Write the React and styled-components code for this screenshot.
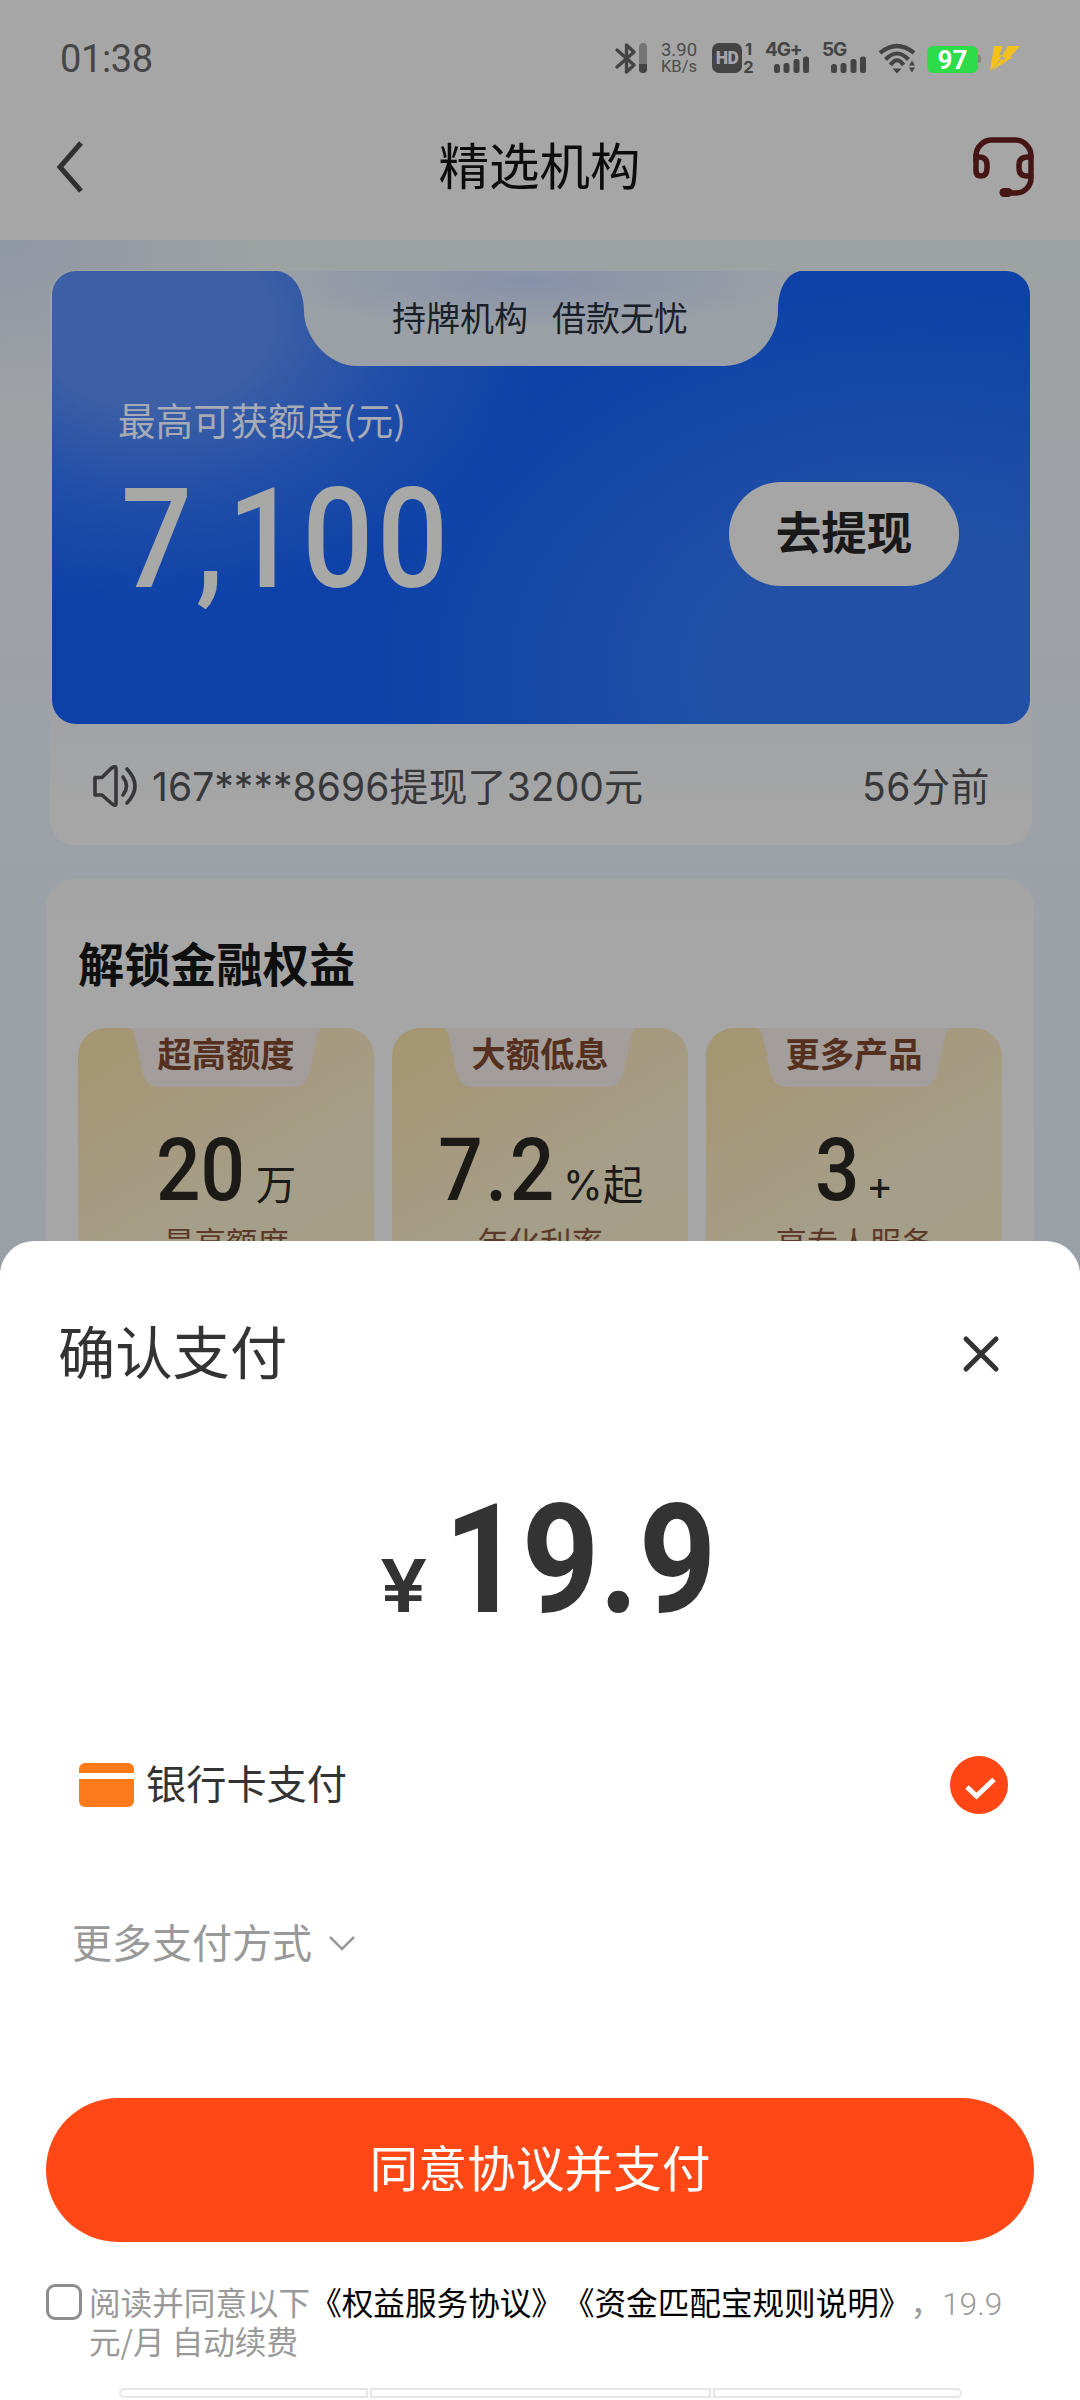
import React from 'react';
import styled, { createGlobalStyle } from 'styled-components';

const cjk = "'Noto Sans CJK SC', sans-serif";

const GlobalStyle = createGlobalStyle`
  * {
    box-sizing: border-box;
  }
  body {
    margin: 0;
    background: #a6a6a6;
    font-family: ${cjk};
    text-spacing-trim: space-all;
  }
`;

const Screen = styled.div`
  position: relative;
  width: 1080px;
  height: 2400px;
  overflow: hidden;
  display: flex;
  flex-direction: column;
  white-space: nowrap;
`;

/* ---------- status bar ---------- */

const StatusBar = styled.div`
  height: 92px;
  padding: 24px 59px 0 60px;
  display: flex;
  justify-content: space-between;
  background: #a6a6a6;
  color: #444;
`;

const Clock = styled.div`
  font: 400 38px/70px Roboto, sans-serif;
  letter-spacing: -0.4px;
  color: #464646;
`;

const StatusIcons = styled.div`
  display: flex;
  padding-top: 17px;
`;

const Speed = styled.div`
  width: 40px;
  margin: 1px 13px 0 11px;
  text-align: center;
  font: 400 18.5px/17px Roboto, sans-serif;
  color: #4c4c4c;
  span {
    display: block;
    font-size: 16.5px;
    line-height: 16px;
  }
`;

const HdBadge = styled.div`
  width: 30px;
  height: 30px;
  margin-top: 2px;
  border-radius: 7px;
  background: #444;
  color: #a6a6a6;
  text-align: center;
  font: 900 17.5px/30px Roboto, sans-serif;
  letter-spacing: -0.5px;
`;

const SimNumbers = styled.div`
  width: 13px;
  margin-right: 10px;
  text-align: center;
  font: 700 16.5px/17.5px Inter, sans-serif;
`;

const Signal = styled.div`
  width: ${(props) => props.$width}px;
  font: 700 19px/17px Inter, sans-serif;
  letter-spacing: -1.2px;
  svg {
    display: block;
    margin: -2px 0 0 9px;
  }
`;

const Battery = styled.div`
  width: 51px;
  height: 27px;
  margin: 5px 0 0 12px;
  border-radius: 6px;
  background: #2edb49;
  color: #fff;
  text-align: center;
  font: 700 26px/29px Roboto, sans-serif;
`;

const BatteryTip = styled.div`
  width: 3px;
  height: 8px;
  margin: 14px 8px 0 0;
  border-radius: 0 3px 3px 0;
  background: #7f8c81;
`;

/* ---------- nav bar ---------- */

const NavBar = styled.div`
  height: 148px;
  padding: 2px 45px 0 56px;
  display: flex;
  align-items: center;
  justify-content: space-between;
  background: #a6a6a6;
`;

const NavTitle = styled.div`
  font-size: 50.5px;
  line-height: 70px;
  color: #0c0c0c;
  padding-left: 23px;
  margin-top: -8px;
`;

/* ---------- page content ---------- */

const Content = styled.div`
  flex: 1;
  padding: 30px 46px 0;
  background:
    radial-gradient(ellipse 260px 170px at 0 0, #9097a5, rgba(144, 151, 165, 0)),
    linear-gradient(#9da2a3, #9fa2a5 160px, #9da1a8 500px, #9b9fa6 1000px);
`;

const QuotaPanel = styled.div`
  height: 575px;
  margin: 0 2px 0 4px;
  padding: 1px 2px 0;
  border-radius: 26px;
  background: linear-gradient(#9fa3a4, #a1a3a6 460px, #a6a6a6 540px);
`;

const QuotaCard = styled.div`
  height: 453px;
  border-radius: 24px;
  display: flex;
  flex-direction: column;
  background:
    radial-gradient(ellipse 400px 290px at 100px 50px, #3c5fa6 30%, rgba(38, 82, 168, 0.75) 62%, rgba(13, 65, 168, 0)),
    radial-gradient(ellipse 560px 400px at 860px 400px, #2150a6 35%, rgba(13, 65, 168, 0)),
    #0d41a8;
`;

const Ribbon = styled.div`
  position: relative;
  width: 522px;
  height: 96px;
  margin-left: 226px;
  svg {
    position: absolute;
    left: 0;
    top: 0;
  }
`;

const RibbonText = styled.div`
  position: relative;
  display: flex;
  gap: 24px;
  padding-left: 114px;
  font-size: 34px;
  line-height: 92px;
  color: #1a2029;
`;

const QuotaBody = styled.div`
  display: flex;
  justify-content: space-between;
  padding: 25px 71px 0 66px;
`;

const QuotaLabel = styled.div`
  font-size: 37.5px;
  line-height: 54px;
  color: #a7abb5;
`;

const QuotaValue = styled.div`
  margin: 23px 0 0 3px;
  font: 500 140px/140px Roboto, sans-serif;
  letter-spacing: 4px;
  color: #a8a8a6;
  transform: scaleX(0.895);
  transform-origin: left;
`;

const WithdrawButton = styled.div`
  width: 230px;
  height: 104px;
  margin-top: 90px;
  border-radius: 52px;
  background: #a6a6a6;
  color: #191919;
  text-align: center;
  font-weight: 700;
  font-size: 45.5px;
  line-height: 97px;
`;

const Notice = styled.div`
  display: flex;
  align-items: center;
  height: 120px;
  padding: 0 40px 0 41px;
  font-family: Inter, ${cjk};
  font-size: 39px;
  letter-spacing: 0.05px;
  color: #38383a;
  svg {
    margin: 4px 15px 0 0;
  }
`;

const NoticeTime = styled.div`
  margin-left: auto;
  letter-spacing: 0.5px;
`;

const BenefitPanel = styled.div`
  height: 600px;
  margin-top: 34px;
  padding: 51px 32px 0;
  border-radius: 28px;
  background: linear-gradient(#a3a4a3, #a6a6a6 60px);
`;

const BenefitTitle = styled.div`
  font-weight: 700;
  font-size: 46.2px;
  line-height: 64px;
  color: #0f0f0f;
`;

const BenefitGrid = styled.div`
  display: grid;
  grid-template-columns: repeat(3, 296px);
  gap: 18px;
  margin-top: 34px;
`;

const BenefitCard = styled.div`
  height: 300px;
  border-radius: 28px;
  display: flex;
  flex-direction: column;
  align-items: center;
  background: linear-gradient(150deg, #a4966f, #a69a80 35%, #a59f8a 60%, #a59b80);
`;

const BenefitTag = styled.div`
  position: relative;
  width: 192px;
  height: 59px;
  text-align: center;
  font-weight: 700;
  font-size: 34.3px;
  line-height: 49px;
  color: #55301f;
  svg {
    position: absolute;
    left: 0;
    top: 0;
  }
  span {
    position: relative;
  }
`;

const BenefitValue = styled.div`
  display: flex;
  align-items: baseline;
  gap: ${(props) => props.$gap}px;
  height: 100px;
  margin-top: 33px;
  padding-right: ${(props) => props.$shift}px;
  font-family: Inter, ${cjk};
  font-size: 40.5px;
  color: #1b1a17;
`;

const BenefitNumber = styled.span`
  font: 500 87px/100px Roboto, sans-serif;
  letter-spacing: ${(props) => props.$spacing || 0}px;
  transform: scaleX(0.9);
  transform-origin: right;
`;

const BenefitNote = styled.div`
  font-size: 31.4px;
  line-height: 44px;
  color: #5c3a2a;
`;

/* ---------- payment sheet ---------- */

const Sheet = styled.div`
  position: absolute;
  left: 0;
  right: 0;
  bottom: 0;
  height: 1159px;
  padding: 0 46px;
  border-radius: 34px 34px 0 0;
  background: #fff;
  color: #333;
`;

const SheetHeader = styled.div`
  display: flex;
  justify-content: space-between;
  height: 151px;
  padding: 68px 34px 0 12px;
  font-size: 57.3px;
  line-height: 82px;
  svg {
    margin-top: 26px;
  }
`;

const Amount = styled.div`
  display: flex;
  justify-content: center;
  align-items: baseline;
  height: 160px;
  margin-top: 78px;
  padding-left: 10px;
  font: 700 153px/180px Roboto, sans-serif;
`;

const Yen = styled.span`
  width: 46px;
  margin-right: 18px;
  font: 600 73px/100px Inter, sans-serif;
  transform: scaleX(1.15);
  transform-origin: left;
`;

const Price = styled.span`
  width: 266px;
  transform: scaleX(0.885);
  transform-origin: left;
`;

const MethodRow = styled.div`
  display: flex;
  align-items: center;
  height: 60px;
  margin-top: 125px;
  padding: 0 26px 0 33px;
  font-size: 40.2px;
`;

const MethodName = styled.div`
  flex: 1;
  padding-left: 11px;
  margin-top: -7px;
`;

const MoreMethods = styled.div`
  display: flex;
  align-items: center;
  gap: 17px;
  height: 60px;
  margin-top: 96px;
  padding-left: 26px;
  font-size: 40px;
  color: #999;
  svg {
    margin-top: 4px;
  }
`;

const PayButton = styled.div`
  height: 144px;
  margin-top: 127px;
  border-radius: 72px;
  background: #ff4816;
  color: #fff;
  text-align: center;
  font-size: 48.7px;
  line-height: 137px;
`;

const Agreement = styled.div`
  display: flex;
  gap: 7px;
  height: 82px;
  margin-top: 39px;
  font-size: 31.6px;
  line-height: 39px;
  color: #999;
`;

const Checkbox = styled.div`
  width: 36px;
  height: 36px;
  margin-top: 3px;
  border: 3px solid #8d8d8d;
  border-radius: 9px;
`;

const Terms = styled.div`
  flex: 1;
  padding-top: 1px;
  b {
    font-weight: 400;
    color: #000;
  }
`;

const Digits = styled.span`
  font-family: Roboto, sans-serif;
  font-weight: 300;
  line-height: 1;
`;

const KeyboardEdge = styled.div`
  display: grid;
  grid-template-columns: 249px 341px 249px;
  gap: 2px;
  margin: 25px 0 0 73px;
`;

const Key = styled.div`
  height: 10px;
  border: 2px solid #e6e6e6;
  border-radius: ${(props) => props.$radius};
`;

const SignalBars = () => (
  <svg width="36" height="18" viewBox="0 0 36 18" fill="#444">
    <rect x="0" y="8" width="6" height="9" rx="2.5" />
    <rect x="9.5" y="7" width="6" height="10" rx="2.5" />
    <rect x="19.5" y="3" width="6" height="14" rx="2.5" />
    <rect x="29" y="0.5" width="6" height="16.5" rx="2.5" />
  </svg>
);

const benefits = [
  { tag: '超高额度', number: '20', unit: '万', gap: 11, shift: 10, note: '最高额度' },
  { tag: '大额低息', number: '7.2', unit: '%起', gap: 6, shift: 12, spacing: 3, note: '年化利率' },
  { tag: '更多产品', number: '3', unit: '+', gap: 7, shift: 5, note: '享专人服务' },
];

const Benefit = ({ item }) => (
  <BenefitCard>
    <BenefitTag>
      <svg width="192" height="59" viewBox="0 0 192 59">
        <path d="M0 0 Q4 2 6 14 L12 42 Q15 59 29 59 H163 Q177 59 180 42 L186 14 Q188 2 192 0 Z" fill="#a39e9b" />
      </svg>
      <span>{item.tag}</span>
    </BenefitTag>
    <BenefitValue $gap={item.gap} $shift={item.shift}>
      <BenefitNumber $spacing={item.spacing}>{item.number}</BenefitNumber>
      <span>{item.unit}</span>
    </BenefitValue>
    <BenefitNote>{item.note}</BenefitNote>
  </BenefitCard>
);

const App = () => {
  return (
    <Screen>
      <GlobalStyle />
      <StatusBar>
        <Clock>01:38</Clock>
        <StatusIcons>
          <svg width="34" height="34" viewBox="0 0 34 34" fill="none">
            <path d="M3 9 L20 24 L12.5 31 V4 L20 11 L3 26" stroke="#444" strokeWidth="3.4" strokeLinejoin="round" strokeLinecap="round" />
            <rect x="25" y="2" width="8" height="30" rx="4" fill="#757575" />
            <path d="M25 23 H33 V28 A4 4 0 0 1 25 28 Z" fill="#444" />
          </svg>
          <Speed>
            3.90
            <span>KB/s</span>
          </Speed>
          <HdBadge>HD</HdBadge>
          <SimNumbers>
            1<br />2
          </SimNumbers>
          <Signal $width={57}>
            4G+
            <SignalBars />
          </Signal>
          <Signal $width={55}>
            5G
            <SignalBars />
          </Signal>
          <svg width="38" height="34" viewBox="0 0 38 34" fill="none" stroke="#444" strokeWidth="4.2">
            <path d="M3 12 Q20 -2 37 12" />
            <path d="M8.5 18.5 Q20 6.5 31.5 18.5" />
            <path d="M13.5 24 Q20 14.5 26.5 24" />
            <path d="M15.5 27.500 H24.500 L20 32.500 Z" fill="#444" stroke="none" />
            <path d="M32 24.500 L35 19.500 L38 24.500 Z M32 26.500 L35 31.500 L38 26.500 Z" fill="#444" stroke="none" />
          </svg>
          <Battery>97</Battery>
          <BatteryTip />
          <svg width="32" height="32" viewBox="0 0 32 32" fill="#f3c11c">
            <path d="M5 5 H14 L10 14 H13 L8 23 L1 30 Z" />
            <path d="M19 5 H31 L21 16 H24 L3 29.500 L12 18.500 H17 L13 15 Z" />
          </svg>
        </StatusIcons>
      </StatusBar>
      <NavBar>
        <svg width="28" height="52" viewBox="0 0 28 52" fill="none" stroke="#303030" strokeWidth="5">
          <path d="M25 2 L4 26 L25 50" />
        </svg>
        <NavTitle>精选机构</NavTitle>
        <svg width="63" height="62" viewBox="0 0 63 62" fill="none" stroke="#461616" strokeWidth="5.5" strokeLinecap="round">
          <path d="M4 24 V20 A16 16 0 0 1 20 4 H43 A16 16 0 0 1 59 20 V42 A15 15 0 0 1 44 57 H34" />
          <path d="M4 21 H7 Q15 21 15 29 V32 Q15 40 9 40 Q4 40 4 35 Z" />
          <path d="M59 21 H56 Q47 21 47 29 V32 Q47 40 55 40 H59" />
          <path d="M32 56.500 H36" strokeWidth="9" />
        </svg>
      </NavBar>
      <Content>
        <QuotaPanel>
          <QuotaCard>
            <Ribbon>
              <svg width="522" height="96" viewBox="0 0 522 96">
                <defs>
                  <radialGradient id="ribbon" cx="0.48" cy="0.1" r="0.5">
                    <stop offset="0" stopColor="#8791aa" />
                    <stop offset="0.5" stopColor="#9098a8" />
                    <stop offset="1" stopColor="#9ba0a6" />
                  </radialGradient>
                </defs>
                <path d="M0 0 C17 3 26 20 26 40 C26 66 50 95 79 95 H446 C478 95 500 66 500 40 C500 18 508 3 522 0 Z" fill="url(#ribbon)" />
              </svg>
              <RibbonText>
                <span>持牌机构</span>
                <span>借款无忧</span>
              </RibbonText>
            </Ribbon>
            <QuotaBody>
              <div>
                <QuotaLabel>最高可获额度(元)</QuotaLabel>
                <QuotaValue>7,100</QuotaValue>
              </div>
              <WithdrawButton>去提现</WithdrawButton>
            </QuotaBody>
          </QuotaCard>
          <Notice>
            <svg width="44" height="42" viewBox="0 0 44 42" fill="none" stroke="#38383a" strokeWidth="3.600" strokeLinejoin="round" strokeLinecap="round">
              <path d="M2 12.500 H9 L18 3.500 Q22.500 0 23 3 V39 Q22.500 42 18 38 L9 30 H2 Z" />
              <path d="M30 12 Q37 21 30 30" />
              <path d="M34 4 Q50 21 34 38" />
            </svg>
            <div>167****8696提现了3200元</div>
            <NoticeTime>56分前</NoticeTime>
          </Notice>
        </QuotaPanel>
        <BenefitPanel>
          <BenefitTitle>解锁金融权益</BenefitTitle>
          <BenefitGrid>
            {benefits.map((item) => (
              <Benefit key={item.tag} item={item} />
            ))}
          </BenefitGrid>
        </BenefitPanel>
      </Content>
      <Sheet>
        <SheetHeader>
          <span>确认支付</span>
          <svg width="38" height="38" viewBox="0 0 38 38" stroke="#333" strokeWidth="5" strokeLinecap="round">
            <path d="M4 4 L34 34 M34 4 L4 34" />
          </svg>
        </SheetHeader>
        <Amount>
          <Yen>¥</Yen>
          <Price>19.9</Price>
        </Amount>
        <MethodRow>
          <svg width="56" height="45" viewBox="0 0 56 45">
            <rect x="0" y="0" width="55" height="44" rx="6" fill="#fc7a1a" />
            <rect x="0" y="10" width="55" height="6" fill="#fff" />
          </svg>
          <MethodName>银行卡支付</MethodName>
          <svg width="58" height="58" viewBox="0 0 58 58" fill="none">
            <circle cx="29" cy="29" r="29" fill="#ff4614" />
            <path d="M17 31 L26.500 40 L44 23.500" stroke="#fff" strokeWidth="5" />
          </svg>
        </MethodRow>
        <MoreMethods>
          更多支付方式
          <svg width="26" height="16" viewBox="0 0 26 16" fill="none" stroke="#999" strokeWidth="2.500">
            <path d="M1 2 L13 14 L25 2" />
          </svg>
        </MoreMethods>
        <PayButton>同意协议并支付</PayButton>
        <Agreement>
          <Checkbox />
          <Terms>
            阅读并同意以下<b>《权益服务协议》《资金匹配宝规则说明》</b>，<Digits>19.9</Digits>
            <br />
            元/月 自动续费
          </Terms>
        </Agreement>
        <KeyboardEdge>
          <Key $radius="5px 0 0 5px" />
          <Key $radius="0" />
          <Key $radius="0 5px 5px 0" />
        </KeyboardEdge>
      </Sheet>
    </Screen>
  );
};

export default App;
